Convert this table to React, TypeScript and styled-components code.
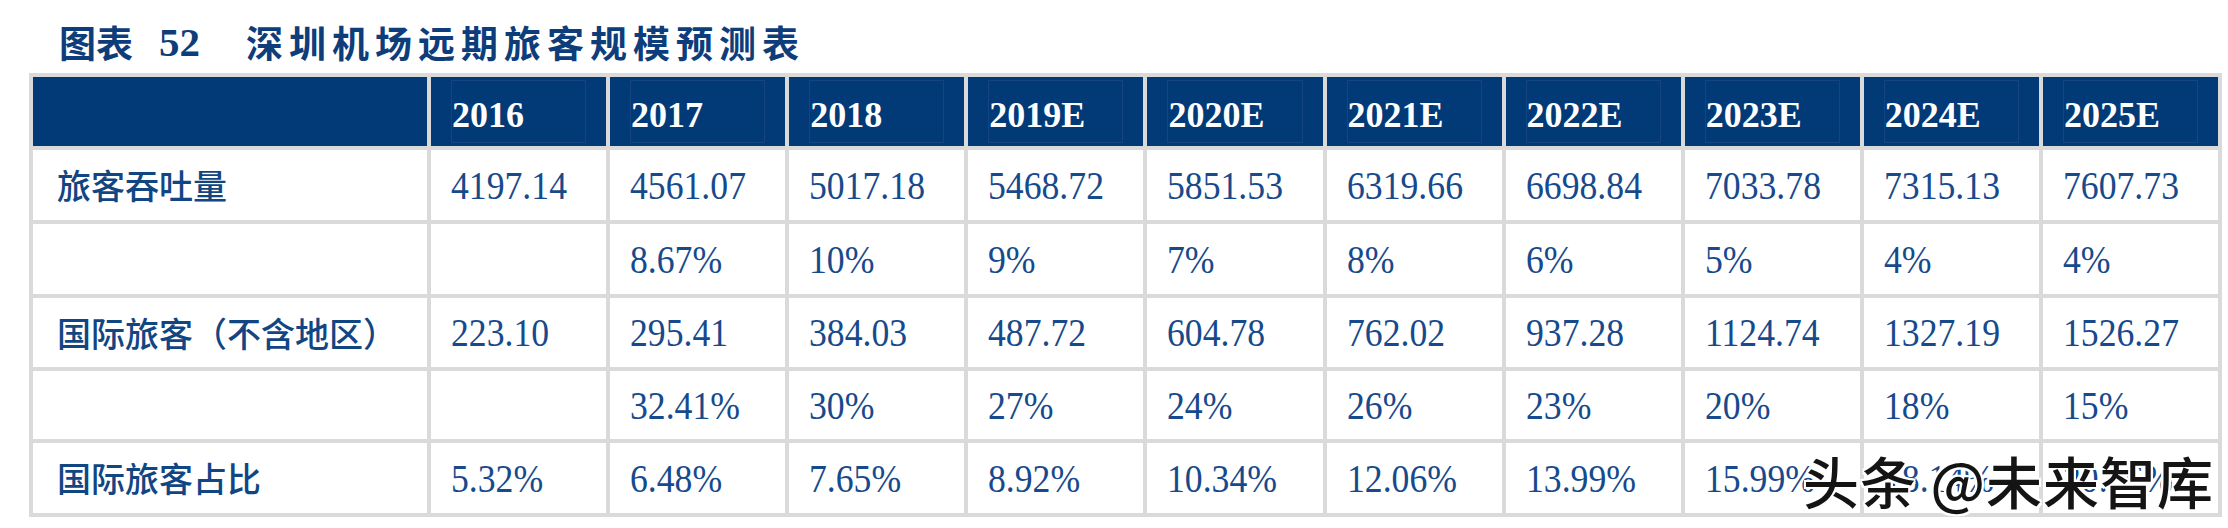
import React from "react";
import styled, { createGlobalStyle } from "styled-components";

const Global = createGlobalStyle`
  html, body { margin: 0; padding: 0; background: #ffffff; }
  body { width: 2228px; height: 528px; overflow: hidden; }
`;

const Page = styled.div`
  position: relative;
  width: 2228px;
  height: 528px;
  box-sizing: border-box;
  padding-left: 29px;
  background: #ffffff;
`;

const TitleBar = styled.div`
  height: 73px;
  box-sizing: border-box;
  padding: 12px 0 0 30px;
  display: flex;
  align-items: center;
  color: #0d3d7a;
`;

const TitleCJK = styled.span<{ $spacing?: number; $gap?: number }>`
  font-family: "Noto Sans CJK SC", sans-serif;
  font-weight: 700;
  font-size: 37px;
  line-height: 1;
  letter-spacing: ${(p) => p.$spacing ?? 0}px;
  margin-left: ${(p) => p.$gap ?? 0}px;
  white-space: nowrap;
`;

const TitleNum = styled.span`
  font-family: "Liberation Serif", "Times New Roman", serif;
  font-weight: 700;
  font-size: 41px;
  line-height: 1;
  margin-left: 26px;
`;

const Table = styled.div`
  display: grid;
  grid-template-columns: 394px repeat(10, 1fr);
  grid-template-rows: 69px 70px 70px 69px 68px 70px;
  gap: 4px;
  padding: 4px;
  width: 2193px;
  box-sizing: border-box;
  background: #dadada;
`;

const HeadCell = styled.div`
  background: #023a78;
  padding: 3px 20px;
  box-sizing: border-box;
  display: flex;
`;

const HeadFrame = styled.div`
  flex: 1;
  border: 1px solid #144580;
  display: flex;
  align-items: center;
  padding-top: 6px;
  box-sizing: border-box;
  color: #ffffff;
  font-family: "Liberation Serif", "Times New Roman", serif;
  font-weight: 700;
  font-size: 36px;
  line-height: 1;
  white-space: nowrap;
`;

const LabelCell = styled.div`
  background: #ffffff;
  display: flex;
  align-items: center;
  padding-left: 24px;
  color: #124683;
  font-family: "Noto Sans CJK SC", sans-serif;
  font-weight: 500;
  font-size: 34px;
  line-height: 1;
  white-space: nowrap;
`;

const ValueCell = styled.div`
  background: #ffffff;
  display: flex;
  align-items: center;
  padding-left: 20px;
  color: #174a8c;
  font-family: "Liberation Serif", "Times New Roman", serif;
  font-size: 39px;
  line-height: 1;
  white-space: nowrap;
`;

const Squeeze = styled.span`
  display: inline-block;
  transform: scaleX(0.915);
  transform-origin: left center;
`;

const Watermark = styled.div`
  position: absolute;
  left: 1803px;
  top: 452px;
  font-family: "Noto Sans CJK SC", sans-serif;
  font-weight: 500;
  font-size: 56px;
  line-height: 56px;
  letter-spacing: 1px;
  color: #141414;
  white-space: nowrap;
  text-shadow: 2px 0 0 #fff, -2px 0 0 #fff, 0 2px 0 #fff, 0 -2px 0 #fff,
    2px 2px 0 #fff, -2px -2px 0 #fff, 2px -2px 0 #fff, -2px 2px 0 #fff;
`;

const years = ["2016", "2017", "2018", "2019E", "2020E", "2021E", "2022E", "2023E", "2024E", "2025E"];

const rows: { label: string; values: string[] }[] = [
  {
    label: "旅客吞吐量",
    values: ["4197.14", "4561.07", "5017.18", "5468.72", "5851.53", "6319.66", "6698.84", "7033.78", "7315.13", "7607.73"],
  },
  { label: "", values: ["", "8.67%", "10%", "9%", "7%", "8%", "6%", "5%", "4%", "4%"] },
  {
    label: "国际旅客（不含地区）",
    values: ["223.10", "295.41", "384.03", "487.72", "604.78", "762.02", "937.28", "1124.74", "1327.19", "1526.27"],
  },
  { label: "", values: ["", "32.41%", "30%", "27%", "24%", "26%", "23%", "20%", "18%", "15%"] },
  {
    label: "国际旅客占比",
    values: ["5.32%", "6.48%", "7.65%", "8.92%", "10.34%", "12.06%", "13.99%", "15.99%", "18.14%", "20.06%"],
  },
];

export default function App() {
  return (
    <>
      <Global />
      <Page>
        <TitleBar>
          <TitleCJK>图表</TitleCJK>
          <TitleNum>52</TitleNum>
          <TitleCJK $spacing={6} $gap={46}>深圳机场远期旅客规模预测表</TitleCJK>
        </TitleBar>
        <Table>
          <HeadCell />
          {years.map((y) => (
            <HeadCell key={y}>
              <HeadFrame>{y}</HeadFrame>
            </HeadCell>
          ))}
          {rows.map((r, i) => (
            <React.Fragment key={i}>
              <LabelCell>{r.label}</LabelCell>
              {r.values.map((v, j) => (
                <ValueCell key={j}>
                  <Squeeze>{v}</Squeeze>
                </ValueCell>
              ))}
            </React.Fragment>
          ))}
        </Table>
        <Watermark>头条 @未来智库</Watermark>
      </Page>
    </>
  );
}
